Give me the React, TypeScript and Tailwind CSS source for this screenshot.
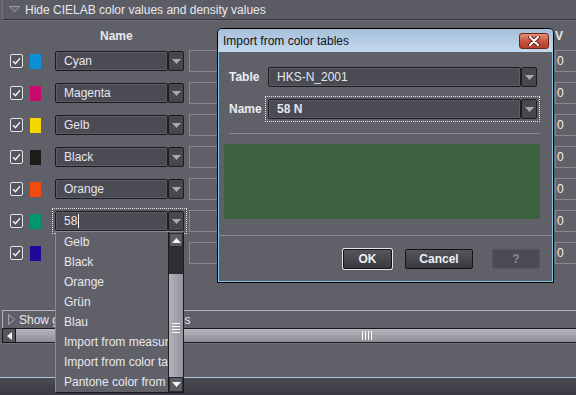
import React from "react";

const rows = [
  { name: "Cyan", color: "#0a8fd8" },
  { name: "Magenta", color: "#c80a6e" },
  { name: "Gelb", color: "#f5d600" },
  { name: "Black", color: "#1e1c1a" },
  { name: "Orange", color: "#f24c0c" },
  { name: "58", color: "#00966e", focus: true },
  { name: "Blau", color: "#23069a" },
];

const listItems = [
  "Gelb",
  "Black",
  "Orange",
  "Grün",
  "Blau",
  "Import from measurement",
  "Import from color tables",
  "Pantone color from library",
];

function DownTri({ color = "#a8a8b0" }: { color?: string }) {
  return (
    <svg width="9" height="5" viewBox="0 0 9 5">
      <polygon points="0,0 9,0 4.5,5" fill={color} />
    </svg>
  );
}

function Check() {
  return (
    <div className="w-[13px] h-[14px] shrink-0 rounded-[2px] border border-[#e2e2e8] bg-[#55555d] flex items-center justify-center">
      <svg width="9" height="8" viewBox="0 0 9 8">
        <path d="M1 4.2 L3.4 6.6 L8 1.2" stroke="#f2f2f6" strokeWidth="1.4" fill="none" />
      </svg>
    </div>
  );
}

function Combo({
  text,
  width,
  bold,
  focus,
  caret,
}: {
  text: string;
  width: string;
  bold?: boolean;
  focus?: boolean;
  caret?: boolean;
}) {
  return (
    <div
      className={`${width} h-[20px] shrink-0 flex ${
        focus ? "outline-1 outline-dotted outline-[#e8e8ee] outline-offset-2" : ""
      }`}
    >
      <div
        className={`flex-1 h-full rounded-[2px] border border-[#1c1c20] bg-[#4b4b53] shadow-[inset_1px_1px_0_#5c5c64,inset_-1px_-1px_0_#5c5c64] flex items-center pl-[8px] text-[#e6e6ee] whitespace-nowrap overflow-hidden ${
          bold ? "font-bold" : ""
        }`}
      >
        {text}
        {caret && <span className="inline-block w-[1px] h-[14px] bg-white ml-[1px]" />}
      </div>
      <div className="w-[16px] h-full rounded-[2px] border border-[#1c1c20] bg-[#47474d] flex items-center justify-center">
        <DownTri />
      </div>
    </div>
  );
}

function DlgButton({
  label,
  width,
  ml,
  variant,
}: {
  label: string;
  width: string;
  ml: string;
  variant: "ok" | "normal" | "disabled";
}) {
  if (variant === "disabled") {
    return (
      <div
        className={`${width} ${ml} h-[20px] rounded-[2px] border border-[#56565e] bg-[#4a4a52] flex items-center justify-center font-bold text-[#8a8a9a]`}
      >
        {label}
      </div>
    );
  }
  return (
    <div
      className={`${width} ${ml} h-[20px] rounded-[2px] border border-[#141418] bg-gradient-to-b from-[#55555d] to-[#39393f] flex items-center justify-center font-bold text-[#eef0f6] ${
        variant === "ok" ? "shadow-[0_0_0_1px_#e4e4ea]" : ""
      }`}
    >
      {label}
    </div>
  );
}

export default function App() {
  return (
    <div className="relative w-[576px] h-[395px] overflow-hidden bg-[#3c3c44] font-['Liberation_Sans',Arial,sans-serif] text-[12px] text-[#e4e4ec] leading-none">
      {/* main panel */}
      <div className="h-[377px] bg-[#606068] flex flex-col">
        {/* header */}
        <div className="h-[20px] shrink-0 ml-[2px] flex items-center bg-[#5c5c64] border-l border-[#74747c] border-b border-b-[#36363c] shadow-[0_1px_0_#6c6c74]">
          <svg width="11" height="7" viewBox="0 0 11 7" className="ml-[6px]">
            <polygon points="0.5,0.5 10.5,0.5 5.5,6" fill="#66666e" stroke="#9c9ca6" strokeWidth="1" />
          </svg>
          <span className="ml-[5px] text-[#e8e8f0] whitespace-nowrap">Hide CIELAB color values and density values</span>
        </div>

        {/* column headers */}
        <div className="h-[31px] shrink-0 flex items-center font-bold text-[#e8e8f0]">
          <div className="w-[555px] pl-[100px]">Name</div>
          <div>V</div>
        </div>

        {/* rows */}
        <div className="flex flex-col gap-[12px]">
          {rows.map((r) => (
            <div key={r.name} className="h-[20px] flex items-center w-[620px]">
              <div className="ml-[10px]">
                <Check />
              </div>
              <div className="ml-[7px] w-[11px] h-[15px] shrink-0" style={{ backgroundColor: r.color }} />
              <div className="ml-[14px]">
                <Combo text={r.name} width="w-[129px]" focus={r.focus} caret={r.focus} />
              </div>
              <div className="ml-[5px] w-[361px] h-[22px] shrink-0 border border-[#88888e]" />
              <div className="ml-[5px] w-[30px] h-[22px] shrink-0 border border-[#88888e] flex items-center pl-[1px] text-[#f0f0f6]">
                0
              </div>
            </div>
          ))}
        </div>

        {/* show bar */}
        <div className="mt-[47px] h-[18px] shrink-0 ml-[2px] flex items-center border-t border-l border-[#b4b4c2]">
          <svg width="7" height="11" viewBox="0 0 7 11" className="ml-[5px]">
            <polygon points="0.5,0.5 6.5,5.5 0.5,10.5" fill="#606068" stroke="#a8a8b2" strokeWidth="1" />
          </svg>
          <span className="ml-[4px] whitespace-nowrap text-[#e8e8f0]">Show gradations and tolerances</span>
        </div>

        {/* horizontal scrollbar */}
        <div className="h-[15px] shrink-0 ml-[2px] flex border-y border-[#18181c]">
          <div className="w-[14px] h-full bg-[#55555b] border-x border-[#18181c] flex items-center justify-center">
            <svg width="5" height="8" viewBox="0 0 5 8">
              <polygon points="5,0 5,8 0,4" fill="#f4f4f8" />
            </svg>
          </div>
          <div className="flex-1 h-full bg-gradient-to-b from-[#b6b6be] to-[#8e8e96] flex items-center pl-[346px] gap-[2px]">
            <div className="w-[1px] h-[9px] bg-white" />
            <div className="w-[1px] h-[9px] bg-white" />
            <div className="w-[1px] h-[9px] bg-white" />
            <div className="w-[1px] h-[9px] bg-white" />
          </div>
        </div>

        <div className="flex-1 border-t border-[#707078]" />
      </div>
      <div className="h-[1px] bg-[#a9c6de]" />
      <div className="h-[17px] bg-gradient-to-b from-[#4a4a52] to-[#3a3a42]" />

      {/* dialog */}
      <div className="absolute left-[217px] top-[28px] w-[337px] h-[255px] border border-black rounded-t-[5px] overflow-hidden bg-[#606068] flex flex-col">
        <div className="h-[23px] shrink-0 bg-gradient-to-b from-[#a6c0da] to-[#c4d9ee] flex items-center pl-[5px] text-[#141414]">
          <span className="whitespace-nowrap">Import from color tables</span>
          <div className="ml-auto mr-[4px] w-[30px] h-[16px] rounded-[3px] border border-[#6e2418] bg-gradient-to-b from-[#e4907e] via-[#c9543e] to-[#b3402c] flex items-center justify-center">
            <svg width="12" height="10" viewBox="0 0 12 10">
              <path d="M2 1 L10 9 M10 1 L2 9" stroke="#5a1a10" strokeWidth="4" strokeLinecap="round" />
              <path d="M2 1 L10 9 M10 1 L2 9" stroke="#ffffff" strokeWidth="2.2" strokeLinecap="round" />
            </svg>
          </div>
        </div>
        <div className="flex-1 border-x border-b border-[#7cc8ec] flex flex-col">
          <div className="mt-[15px] flex items-center pl-[10px]">
            <div className="w-[39px] font-bold text-[#ececf2]">Table</div>
            <Combo text="HKS-N_2001" width="w-[269px]" />
          </div>
          <div className="mt-[12px] flex items-center pl-[10px]">
            <div className="w-[39px] font-bold text-[#ececf2]">Name</div>
            <Combo text="58 N" width="w-[269px]" bold focus />
          </div>
          <div className="mt-[14px] ml-[10px] w-[311px] h-[1px] bg-[#8a8a92]" />
          <div className="mt-[10px] ml-[5px] w-[316px] h-[75px] bg-[#3c6140]" />
          <div className="mt-[16px] h-[1px] bg-[#8a8a92]" />
          <div className="mt-[13px] flex">
            <DlgButton label="OK" width="w-[49px]" ml="ml-[124px]" variant="ok" />
            <DlgButton label="Cancel" width="w-[68px]" ml="ml-[13px]" variant="normal" />
            <DlgButton label="?" width="w-[48px]" ml="ml-[19px]" variant="disabled" />
          </div>
        </div>
      </div>

      {/* dropdown list */}
      <div className="absolute left-[55px] top-[231px] w-[129px] h-[162px] border border-[#8a8a92] border-r-[#1c1c20] border-b-[#1c1c20] bg-[#606068] flex">
        <div className="flex-1 flex flex-col overflow-hidden">
          {listItems.map((i) => (
            <div key={i} className="h-[20px] shrink-0 flex items-center pl-[8px] whitespace-nowrap text-[#e8e8f0]">
              {i}
            </div>
          ))}
        </div>
        <div className="w-[15px] flex flex-col border-l border-[#1c1c20] pt-[1px]">
          <div className="h-[14px] shrink-0 bg-[#5c5c62] border border-[#2a2a30] flex items-center justify-center">
            <svg width="9" height="5" viewBox="0 0 9 5">
              <polygon points="0,5 9,5 4.5,0" fill="#f4f4f8" />
            </svg>
          </div>
          <div className="h-[27px] shrink-0 bg-[#2e2e34]" />
          <div className="flex-1 bg-gradient-to-r from-[#b2b2ba] to-[#94949c] flex flex-col items-center justify-center gap-[2px] pt-[4px]">
            <div className="w-[8px] h-[1px] bg-white" />
            <div className="w-[8px] h-[1px] bg-white" />
            <div className="w-[8px] h-[1px] bg-white" />
            <div className="w-[8px] h-[1px] bg-white" />
          </div>
          <div className="h-[15px] shrink-0 bg-[#5c5c62] border border-[#2a2a30] flex items-center justify-center">
            <DownTri color="#f4f4f8" />
          </div>
        </div>
      </div>
    </div>
  );
}
